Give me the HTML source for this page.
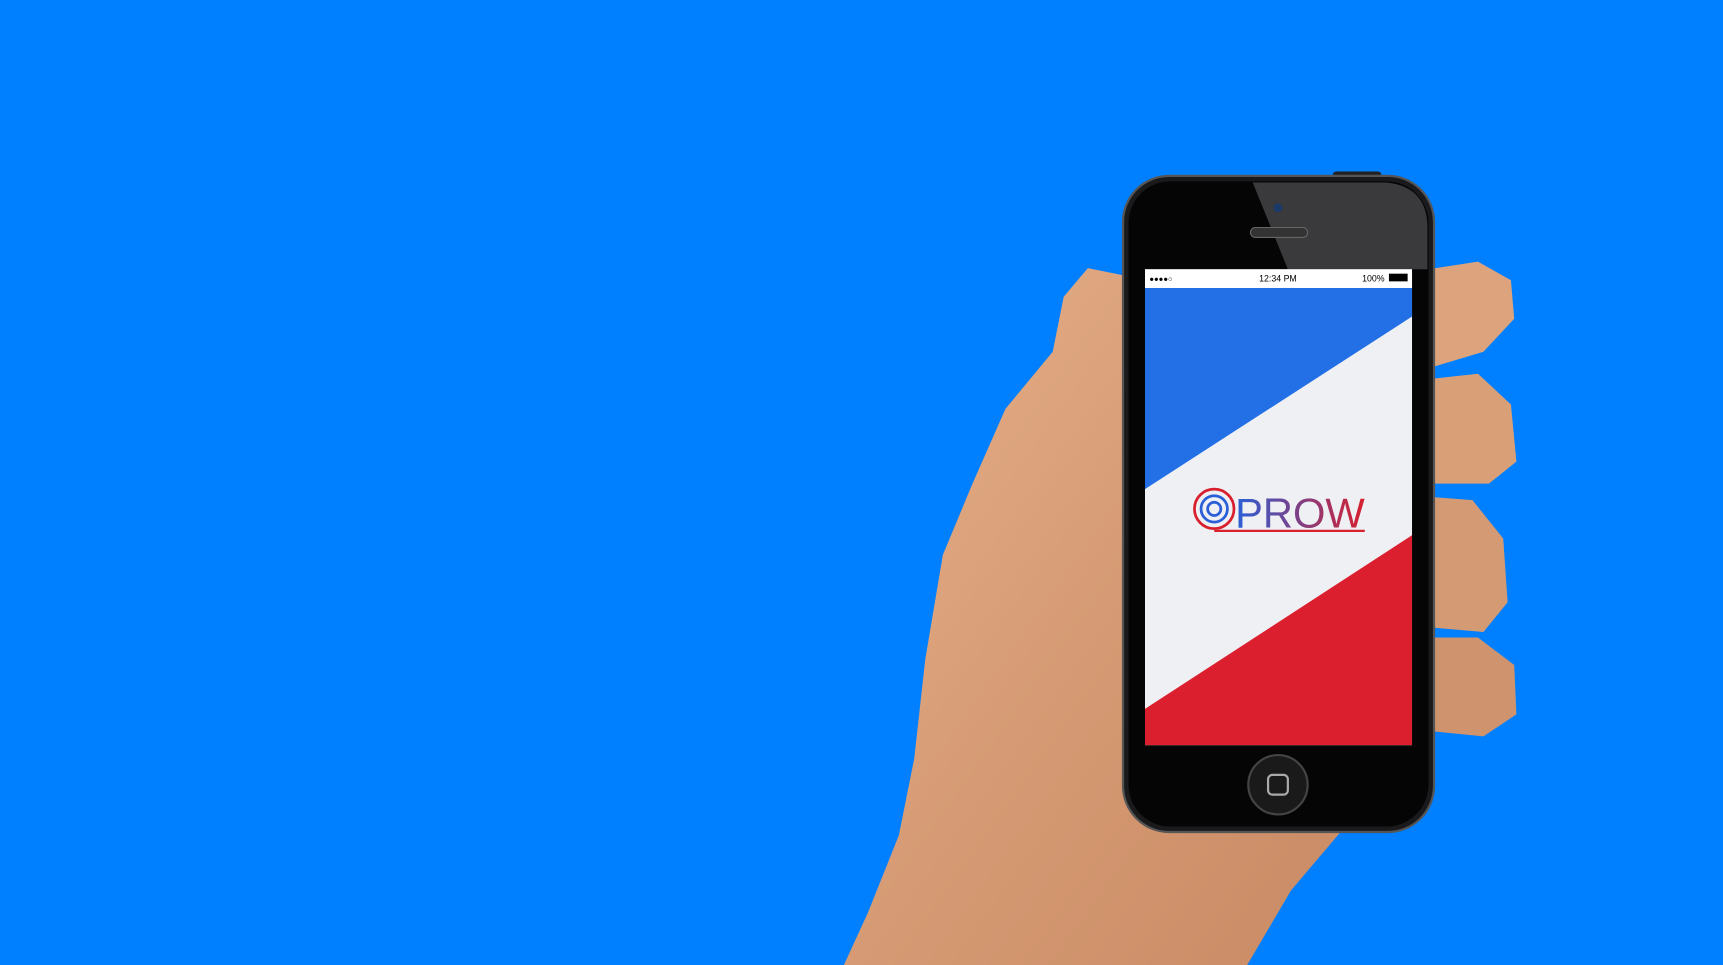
<!DOCTYPE html>
<html><head><style>
html,body{margin:0;padding:0;width:1723px;height:965px;overflow:hidden;background:#0080ff}
svg{display:block}
</style></head><body>
<svg width="1723" height="965" viewBox="0 0 1568 878" preserveAspectRatio="none" xmlns="http://www.w3.org/2000/svg">
<defs>
<linearGradient id="skin" x1="0" y1="0" x2="1" y2="1">
<stop offset="0" stop-color="#e6b08a"/><stop offset="0.5" stop-color="#d69b74"/><stop offset="1" stop-color="#c98a64"/>
</linearGradient>
<linearGradient id="logo" x1="0" x2="1"><stop offset="0" stop-color="#2a5fd8"/><stop offset="1" stop-color="#d8202e"/></linearGradient>
</defs>
<rect width="1568" height="878" fill="#0080ff"/>
<path d="M1030,252 L990,244 L968,270 L958,320 L915,372 L885,440 L858,505 L842,600 L832,690 L818,760 L790,830 L768,878 L1135,878 L1175,810 L1220,757 L1100,740 L1030,700 Z" fill="url(#skin)"/>
<path d="M1300,245 L1345,238 L1375,255 L1378,290 L1350,320 L1300,335 Z" fill="#dca37c"/>
<path d="M1300,345 L1345,340 L1375,368 L1380,420 L1355,440 L1300,440 Z" fill="#d9a078"/>
<path d="M1300,452 L1340,455 L1368,490 L1372,548 L1350,575 L1292,570 Z" fill="#d49a73"/>
<path d="M1300,580 L1345,580 L1378,605 L1380,650 L1350,670 L1300,665 Z" fill="#cf946d"/>
<rect x="1213" y="156" width="44" height="8" rx="3" fill="#222"/>
<rect x="1022" y="160" width="283" height="597" rx="42" fill="#1a1a1c" stroke="#555" stroke-width="2"/>
<rect x="1027" y="165" width="273" height="587" rx="38" fill="#050505"/>
<path d="M1140,166 L1262,166 Q1298,170 1299,205 L1299,245 L1172,245 Z" fill="#3a3a3c"/>
<circle cx="1163" cy="189" r="4" fill="#1a3a6a"/>
<rect x="1138" y="207" width="52" height="9" rx="4.5" fill="#333" stroke="#666" stroke-width="1"/>
<rect x="1042" y="245" width="243" height="433" fill="#eef0f4"/>
<polygon points="1042,262 1285,262 1285,288 1042,445" fill="#2370e6"/>
<polygon points="1042,645 1285,487 1285,678 1042,678" fill="#dc1f2e"/>
<rect x="1042" y="245" width="243" height="17" fill="#fff"/>
<text x="1046" y="256" font-family="Liberation Sans,sans-serif" font-size="7" fill="#000">●●●●○</text>
<text x="1163" y="256" text-anchor="middle" font-family="Liberation Sans,sans-serif" font-size="8" fill="#000">12:34 PM</text>
<text x="1260" y="256" text-anchor="end" font-family="Liberation Sans,sans-serif" font-size="8" fill="#000">100%</text>
<rect x="1264" y="249" width="17" height="7" fill="#000"/>
<g fill="none" stroke-width="2.5">
<circle cx="1105" cy="463" r="18" stroke="#d8202e"/>
<circle cx="1105" cy="463" r="12" stroke="#2a5fd8"/>
<circle cx="1105" cy="463" r="6" stroke="#2a5fd8"/>
</g>
<text x="1124" y="480" font-family="Liberation Sans,sans-serif" font-size="38" fill="url(#logo)" textLength="118" lengthAdjust="spacingAndGlyphs">PROW</text>
<line x1="1105" y1="483" x2="1242" y2="483" stroke="#d8202e" stroke-width="2"/>
<circle cx="1163" cy="714" r="27" fill="#1a1a1a" stroke="#444" stroke-width="2"/>
<rect x="1154" y="705" width="18" height="18" rx="4" fill="none" stroke="#aaa" stroke-width="2"/>
</svg>
</body></html>
